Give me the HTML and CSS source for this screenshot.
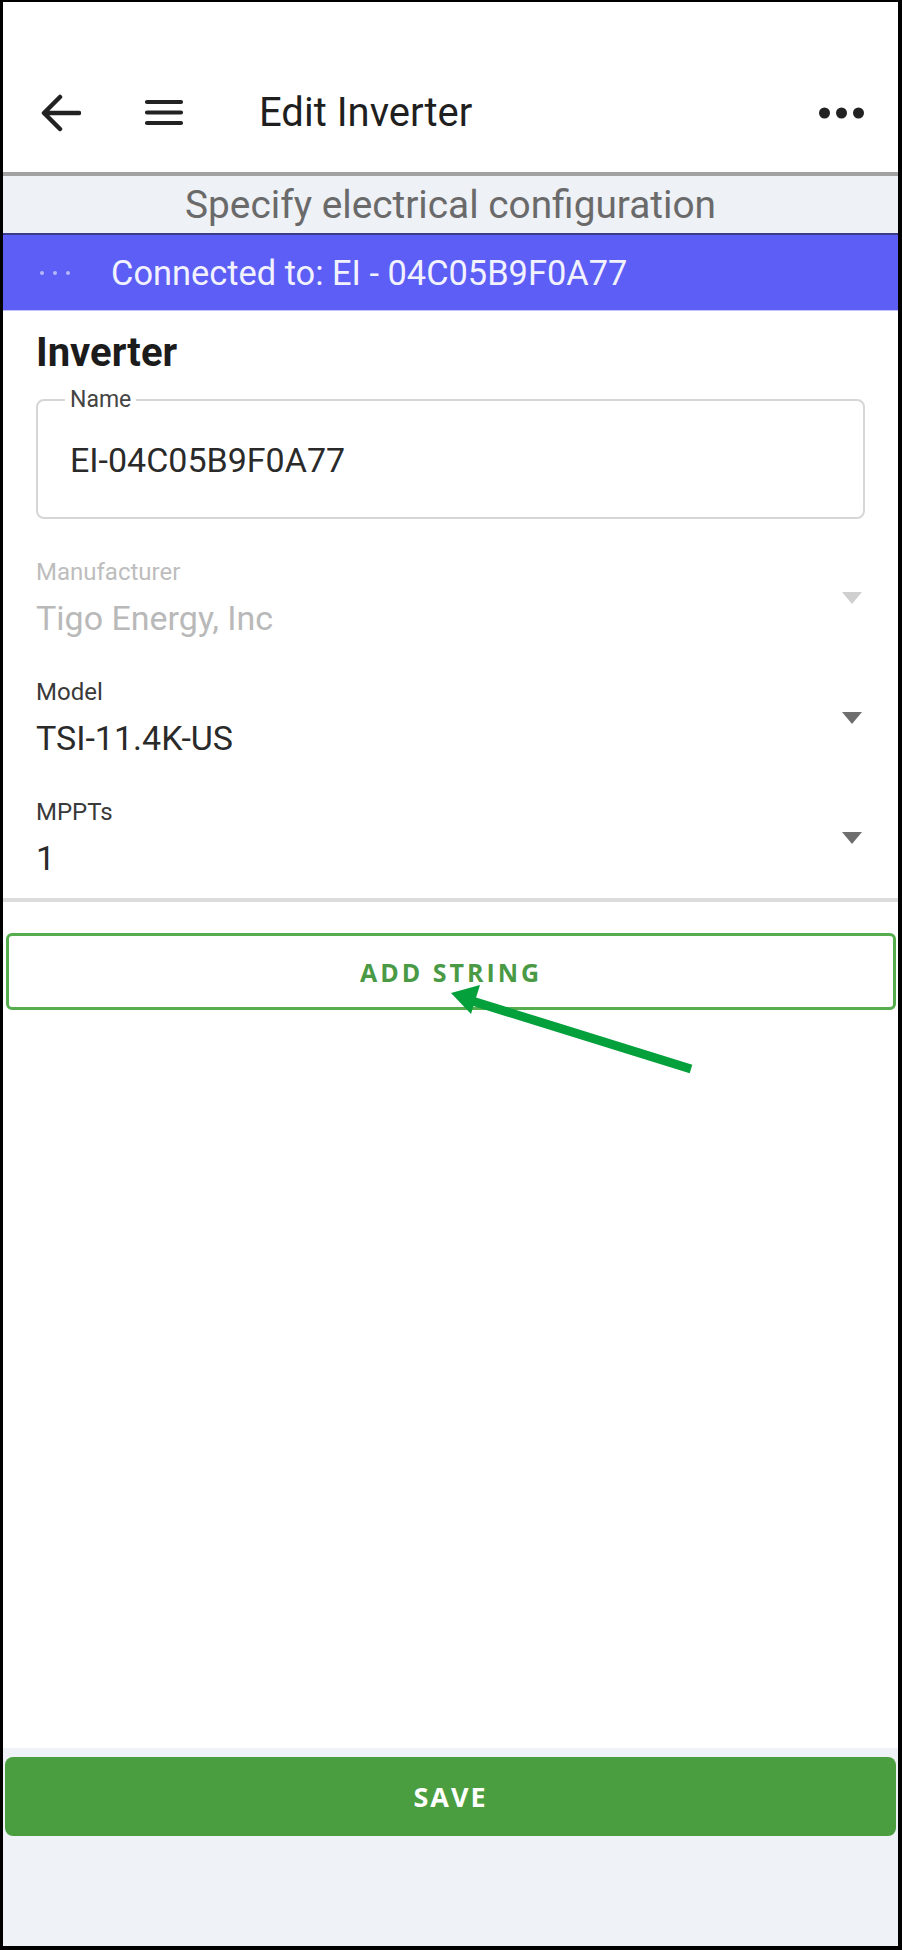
FILE: index.html
```html
<!DOCTYPE html>
<html lang="en">
<head>
    <meta charset="UTF-8">
    <meta name="viewport" content="width=device-width,initial-scale=1.0">
    <title>Edit Inverter</title>
    <link rel="stylesheet" href="styles.css">
</head>
<body>
    <div class="screen">
        <header class="toolbar">
            <svg class="back" width="40" height="40" viewBox="0 0 40 40">
                <path d="M38 20 H4 M19 4 L3 20 L19 36" fill="none" stroke="#222" stroke-width="4.5" stroke-linecap="round" stroke-linejoin="round"/>
            </svg>
            <svg class="menu" width="40" height="28" viewBox="0 0 40 28">
                <path d="M3 3 H37 M3 13.5 H37 M3 24 H37" stroke="#222" stroke-width="4.2" stroke-linecap="round"/>
            </svg>
            <h1 class="title">Edit Inverter</h1>
            <svg class="more" width="46" height="12" viewBox="0 0 46 12">
                <circle cx="5.5" cy="6" r="5.5" fill="#222"/>
                <circle cx="22.5" cy="6" r="5.5" fill="#222"/>
                <circle cx="39.5" cy="6" r="5.5" fill="#222"/>
            </svg>
        </header>
        <div class="step">Specify electrical configuration</div>
        <div class="connected">
            <span class="dots"><i></i><i></i><i></i></span>
            <span>Connected to: EI - 04C05B9F0A77</span>
        </div>

        <main class="content">
            <section class="form">
                <h2>Inverter</h2>
                <fieldset class="outlined">
                    <legend>Name</legend>
                    <div class="value">EI-04C05B9F0A77</div>
                </fieldset>

                <div class="select disabled">
                    <div>
                        <div class="label">Manufacturer</div>
                        <div class="value">Tigo Energy, Inc</div>
                    </div>
                    <span class="caret"></span>
                </div>
                <div class="select">
                    <div>
                        <div class="label">Model</div>
                        <div class="value">TSI-11.4K-US</div>
                    </div>
                    <span class="caret"></span>
                </div>
                <div class="select">
                    <div>
                        <div class="label">MPPTs</div>
                        <div class="value">1</div>
                    </div>
                    <span class="caret"></span>
                </div>
            </section>
            <div class="divider"></div>
            <div class="add-wrap">
                <button class="add-string">ADD STRING</button>
            </div>
        </main>

        <footer class="footer">
            <button class="save">SAVE</button>
        </footer>

        <svg class="annotation" width="902" height="1950" viewBox="0 0 902 1950">
            <line x1="469" y1="1000" x2="691" y2="1069" stroke="#03a03b" stroke-width="9"/>
            <polygon points="451,993 480,985 471,1014" fill="#03a03b"/>
        </svg>
    </div>
</body>
</html>
```

FILE: styles.css
```css
*{
    margin: 0;
    padding: 0;
    box-sizing: border-box;
}
body{
    font-family: Roboto, "Noto Sans", sans-serif;
    background: #000;
}
.screen{
    position: relative;
    width: 902px;
    height: 1950px;
    border-style: solid;
    border-color: #000;
    border-width: 2px 4px 4px 3px;
    background: #fff;
    display: flex;
    flex-direction: column;
    overflow: hidden;
}
.toolbar{
    height: 174px;
    padding-top: 52px;
    display: flex;
    align-items: center;
    border-bottom: 4px solid #a2a2a2;
}
.back{
    margin-left: 38px;
}
.menu{
    margin-left: 63px;
}
.title{
    margin-left: 75px;
    font-size: 40px;
    font-weight: 400;
    line-height: 48px;
    color: #1f1f1f;
}
.more{
    margin-left: auto;
    margin-right: 33px;
}
.step{
    height: 57px;
    background: #eef1f6;
    color: #6a6a6a;
    font-size: 38.8px;
    line-height: 57px;
    text-align: center;
}
.connected{
    height: 78px;
    background: #5c5ef6;
    border-top: 2px solid #3b3d8a;
    border-bottom: 1px solid #c3c4fb;
    color: #f2f2ff;
    font-size: 34.4px;
    display: flex;
    align-items: center;
}
.dots{
    display: flex;
    gap: 9px;
    margin-left: 37px;
    margin-right: 41px;
}
.dots i{
    width: 4px;
    height: 4px;
    border-radius: 50%;
    background: #b6b8fa;
}
.content{
    flex: 1;
}
.form{
    padding: 19px 33px 20px;
}
.form h2{
    font-size: 40px;
    font-weight: 700;
    line-height: 46px;
    color: #1c1c1c;
}
.outlined{
    margin-top: 10px;
    border: 2px solid #d6d6d6;
    border-radius: 8px;
    padding: 26px 32px 37px;
}
.outlined legend{
    font-size: 23px;
    line-height: 28px;
    color: #444;
    padding: 0 5px;
    margin-left: -5px;
}
.value{
    font-size: 34px;
    line-height: 40px;
    color: #2a2a2a;
}
.select{
    margin-top: 40px;
    display: flex;
    align-items: center;
    justify-content: space-between;
}
.select.disabled{
    margin-top: 39px;
}
.label{
    font-size: 24px;
    line-height: 28px;
    margin-bottom: 12px;
    color: #3a3a3a;
}
.caret{
    width: 0;
    height: 0;
    margin-right: 3px;
    border-left: 10px solid transparent;
    border-right: 10px solid transparent;
    border-top: 12px solid #6e6e6e;
}
.disabled .label{
    color: #bdbdbd;
}
.disabled .value{
    color: #b9b9b9;
}
.disabled .caret{
    border-top-color: #cfcfcf;
}
.divider{
    height: 4px;
    background: #dcdcdc;
}
.add-wrap{
    padding: 31px 2px 0 3px;
}
.add-string{
    width: 100%;
    height: 77px;
    background: #fff;
    border: 3px solid #56ad4e;
    border-radius: 6px;
    color: #4a9a45;
    font-family: "Open Sans", sans-serif;
    font-size: 25px;
    font-weight: 700;
    letter-spacing: 3px;
}
.footer{
    height: 198px;
    background: #eff2f7;
    padding: 9px 2px 0;
}
.save{
    width: 100%;
    height: 79px;
    background: #4a9e40;
    border: none;
    border-radius: 8px;
    color: #fff;
    font-family: "Open Sans", sans-serif;
    font-size: 27px;
    font-weight: 700;
    letter-spacing: 2px;
}
.annotation{
    position: absolute;
    left: -3px;
    top: -2px;
    pointer-events: none;
}
```
